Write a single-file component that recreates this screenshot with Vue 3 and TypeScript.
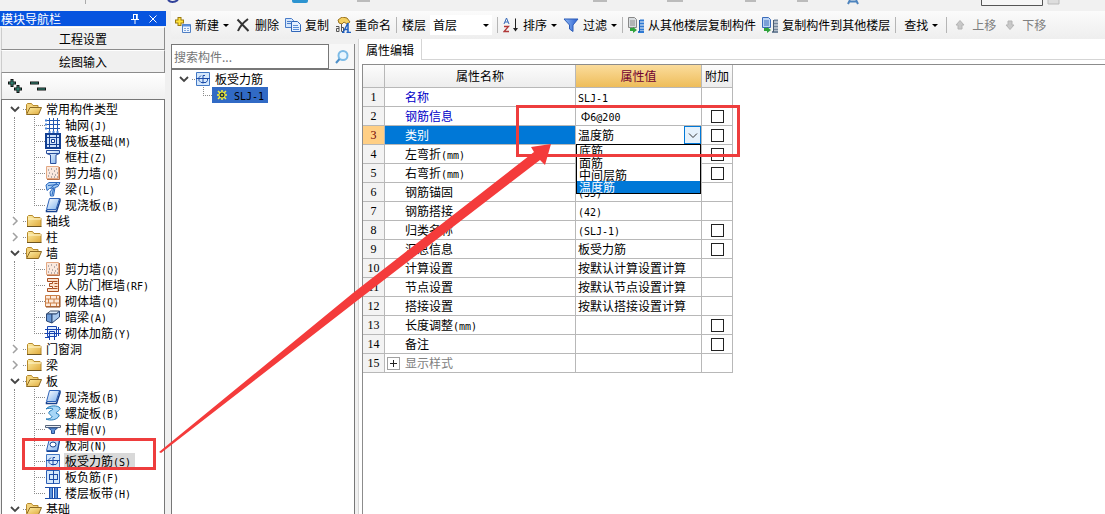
<script setup lang="ts">
import { computed, h, ref } from 'vue'

interface TreeChild {
  icon: string
  label: string
}
interface TreeGroup {
  label: string
  open: boolean
  children: TreeChild[]
}
interface PropertyRow {
  name: string
  value: string
  check?: boolean
  kind?: 'key' | 'combo' | 'group'
}

const Mixed = (props: { text: string }) =>
  h(
    'span',
    { class: 'mixed' },
    props.text
      .split(/([\x21-\x7e]+)/)
      .filter(Boolean)
      .map((part) => (/^[\x21-\x7e]/.test(part) ? h('span', { class: 'latin' }, part) : part)),
  )
Mixed.props = ['text']

const groups = ref<TreeGroup[]>([
  {
    label: '常用构件类型',
    open: true,
    children: [
      { icon: 'grid', label: '轴网(J)' },
      { icon: 'raft', label: '筏板基础(M)' },
      { icon: 'column', label: '框柱(Z)' },
      { icon: 'shear', label: '剪力墙(Q)' },
      { icon: 'beam', label: '梁(L)' },
      { icon: 'slab', label: '现浇板(B)' },
    ],
  },
  { label: '轴线', open: false, children: [] },
  { label: '柱', open: false, children: [] },
  {
    label: '墙',
    open: true,
    children: [
      { icon: 'shear', label: '剪力墙(Q)' },
      { icon: 'doorwall', label: '人防门框墙(RF)' },
      { icon: 'brick', label: '砌体墙(Q)' },
      { icon: 'hidden', label: '暗梁(A)' },
      { icon: 'masonry', label: '砌体加筋(Y)' },
    ],
  },
  { label: '门窗洞', open: false, children: [] },
  { label: '梁', open: false, children: [] },
  {
    label: '板',
    open: true,
    children: [
      { icon: 'slab', label: '现浇板(B)' },
      { icon: 'spiral', label: '螺旋板(B)' },
      { icon: 'cap', label: '柱帽(V)' },
      { icon: 'hole', label: '板洞(N)' },
      { icon: 'rebar', label: '板受力筋(S)' },
      { icon: 'negative', label: '板负筋(F)' },
      { icon: 'strip', label: '楼层板带(H)' },
    ],
  },
  { label: '基础', open: true, children: [] },
])
const selected = ref('板受力筋(S)')

const rows: PropertyRow[] = [
  { name: '名称', value: 'SLJ-1', kind: 'key' },
  { name: '钢筋信息', value: ' Φ6@200', check: true, kind: 'key' },
  { name: '类别', value: '温度筋', check: true, kind: 'combo' },
  { name: '左弯折(mm)', value: '', check: true },
  { name: '右弯折(mm)', value: '', check: true },
  { name: '钢筋锚固', value: '(35)' },
  { name: '钢筋搭接', value: '(42)' },
  { name: '归类名称', value: '(SLJ-1)', check: true },
  { name: '汇总信息', value: '板受力筋', check: true },
  { name: '计算设置', value: '按默认计算设置计算' },
  { name: '节点设置', value: '按默认节点设置计算' },
  { name: '搭接设置', value: '按默认搭接设置计算' },
  { name: '长度调整(mm)', value: '', check: true },
  { name: '备注', value: '', check: true },
  { name: '显示样式', value: '', kind: 'group' },
]

const category = ref('温度筋')
const listOpen = ref(true)
const options = ['底筋', '面筋', '中间层筋', '温度筋']
const activeIndex = computed(() => options.indexOf(category.value))

function choose(option: string) {
  category.value = option
  listOpen.value = false
}
</script>

<template>
  <div class="app">
    <svg class="defs" width="0" height="0" aria-hidden="true">
      <defs>
        <linearGradient id="gBlue" x1="0" y1="0" x2="1" y2="1">
          <stop offset="0" stop-color="#ffffff" />
          <stop offset="1" stop-color="#7fb2ee" />
        </linearGradient>
        <linearGradient id="gFunnel" x1="0" y1="0" x2="1" y2="0">
          <stop offset="0" stop-color="#8fb9f4" />
          <stop offset="1" stop-color="#2a5fd0" />
        </linearGradient>
        <linearGradient id="gFolder" x1="0" y1="0" x2="1" y2="1">
          <stop offset="0" stop-color="#fff0a8" />
          <stop offset="1" stop-color="#dfa93a" />
        </linearGradient>
        <symbol id="folder-closed" viewBox="0 0 16 16">
          <path d="M1.500 13.500V3.500l1-1h4l1.500 2h6l1 1v8z" fill="url(#gFolder)" stroke="#b78a2c" />
          <path d="M2 6h13" stroke="#fff6cf" />
          <path d="M1 13.500h14.500" stroke="#6d5420" />
        </symbol>
        <symbol id="folder-open" viewBox="0 0 16 16">
          <path d="M.5 12.500v-9l1-1h4l1.500 2h5v3" fill="#f3d37c" stroke="#b78a2c" />
          <path d="M.5 13.500L4 6.500h11.500l-3 7z" fill="url(#gFolder)" stroke="#8d6a22" />
        </symbol>
        <symbol id="grid" viewBox="0 0 16 16">
          <path d="M4.500 1v14M8.500 1v14M12.500 1v14M1 3.500h14M1 7.500h14M1 11.500h14" stroke="#2458b0" fill="none" />
          <path d="M0 2.500h2v2H0zM0 6.500h2v2H0zM0 10.500h2v2H0zM3.500 14h2v2h-2zM7.500 14h2v2h-2zM11.500 14h2v2h-2z" fill="#4b86d8" />
        </symbol>
        <symbol id="raft" viewBox="0 0 16 16">
          <path d="M1 1h14v14H1z" fill="#cfe3fb" stroke="#123f92" stroke-width="2" />
          <path d="M4.500 2v12M11.500 2v12M2 4.500h12M2 11.500h12" stroke="#123f92" />
          <path d="M6.500 6.500h3v3h-3z" fill="#fff" stroke="#123f92" />
        </symbol>
        <symbol id="column" viewBox="0 0 16 16">
          <path d="M1.500 1.500h13v3l-3.500 1.500v8.500H5.500V6L1.500 4.500z" fill="url(#gBlue)" stroke="#2a4f9c" />
          <path d="M2 4.500h12" stroke="#2a4f9c" />
        </symbol>
        <symbol id="shear" viewBox="0 0 16 16">
          <path d="M1.500 1.500h12v12h-12z" fill="#fbe9de" stroke="#e3a883" />
          <path d="M14.500 2v12.500H2" stroke="#b9714a" fill="none" />
          <path d="M3 5h1M6 4h1M9 6h1M11 4h1M4 8h1M7 9h1M10 10h1M3 11h1M6 12h1M12 8h1M9 12h1M12 12h1" stroke="#6e6e78" />
        </symbol>
        <symbol id="beam" viewBox="0 0 16 16">
          <path d="M1 4l3-2.500h11l-2 4-3 1-1.500 8.500H5.500l-.5-4 3-4-3.500.5L2 9.500z" fill="#a9d0f6" stroke="#2b68bd" />
          <path d="M3 4.500l10-1M5.500 7L12 2M7 14l2-8" stroke="#2b68bd" fill="none" />
        </symbol>
        <symbol id="slab" viewBox="0 0 16 16">
          <path d="M4.500 1.500h10l-3.500 11H1.500z" fill="url(#gBlue)" stroke="#2e63b8" />
          <path d="M1.500 13v1.500H11.500L15 4V1.500" fill="none" stroke="#17418e" stroke-width="1.500" />
        </symbol>
        <symbol id="doorwall" viewBox="0 0 16 16">
          <path d="M2.500 1.500h11v13h-11v-3h5v-2h-3v-3h3v-2h-5z" fill="#fde2cb" stroke="#a84f22" />
          <path d="M7.500 4.500h5M7.500 11.500h5M9.500 6.500h3M9.500 9.500h3" stroke="#a84f22" />
        </symbol>
        <symbol id="brick" viewBox="0 0 16 16">
          <path d="M.5 2.500h14v11H.5z" fill="#fdeadb" stroke="#cc8048" />
          <path d="M1 6h14M1 10h14M5.500 2.500V6M11.500 2.500V6M3.500 6v4M9 6v4M5.500 10v4M11.500 10v4" stroke="#cc8048" fill="none" />
          <path d="M15 3v11H1" stroke="#8e4a20" fill="none" />
        </symbol>
        <symbol id="hidden" viewBox="0 0 16 16">
          <path d="M1.500 5l4-3h9l-3 3z" fill="#dbe9f8" stroke="#44546c" />
          <path d="M1.500 5H7v9l-5.500-2z" fill="#6b9bd8" stroke="#2b4674" />
          <path d="M7 5h4.500L14.500 2v6L7 14z" fill="#a9c9ee" stroke="#2b4674" />
        </symbol>
        <symbol id="masonry" viewBox="0 0 16 16">
          <path d="M2.500 1.500h9v10h-9z" fill="#e2efff" stroke="#1743b0" />
          <path d="M0 4.500h16M0 8.500h16M4.500 15V6.500h5V15M13.500 2v9M0 12.500h5" stroke="#1743b0" fill="none" />
        </symbol>
        <symbol id="spiral" viewBox="0 0 16 16">
          <path d="M1 4C4 0 13 0 15 3c1 2-4 4-4 5 1 1 4 1 3 3-2 4-9 5-13 3 3 0 6-1 6-2.500C6 10 3 9 4 7c1-1.500 4-2 4-3C7 3 3 3 1 4z" fill="#a6d6f7" stroke="#237ab8" />
        </symbol>
        <symbol id="cap" viewBox="0 0 16 16">
          <path d="M.5 4.500h15v2H.5z" fill="#e8edf4" stroke="#56647a" />
          <path d="M3.500 7h9l-3 2.500v3h-3v-3z" fill="#5f92d6" stroke="#274f90" />
        </symbol>
        <symbol id="hole" viewBox="0 0 16 16">
          <path d="M4.500 1.500h10l-2 12H1.500z" fill="url(#gBlue)" stroke="#2e63b8" />
          <path d="M1.500 14.500H12.500L15 2" fill="none" stroke="#17418e" />
          <ellipse cx="8" cy="7.500" rx="3" ry="2.500" fill="#fff" stroke="#17418e" />
        </symbol>
        <symbol id="rebar" viewBox="0 0 16 16">
          <path d="M1.500 1.500h13v13h-13z" fill="#d5e8fc" stroke="#4378c4" />
          <path d="M1 7.500h14M6 4.500l-2 2v3l2 2h5l1.500-2v-2M10 4.500H8v8" stroke="#1c4ca8" fill="none" />
        </symbol>
        <symbol id="negative" viewBox="0 0 16 16">
          <path d="M1.500 1.500h13v13h-13z" fill="#d5e8fc" stroke="#2d5fb5" />
          <path d="M8.500 1v14M4 5.500h9M4 10.500h9M4.500 5v6M12.500 5v6" stroke="#1c4ca8" fill="none" />
        </symbol>
        <symbol id="strip" viewBox="0 0 16 16">
          <path d="M5 3h2v10H5zM10 3h2v10h-2z" fill="#5b93dc" />
          <path d="M0 2.500h16M0 13.500h16M4.500 3v10M7.500 3v10M9.500 3v10M12.500 3v10" stroke="#1c4ca8" fill="none" />
        </symbol>
        <symbol id="new" viewBox="0 0 16 16">
          <path d="M4.500 0v9M0 4.500h9" stroke="#9a7a10" stroke-width="4" />
          <path d="M4.500 1v7M1 4.500h7" stroke="#ffe23c" stroke-width="2" />
          <path d="M7.500 7.500h8v8h-8z" fill="#eef5ff" stroke="#4f7fc4" />
          <path d="M8 8.500h7" stroke="#5a8fe0" stroke-width="2" />
          <path d="M9 11.500h2M12 11.500h2M9 13.500h2M12 13.500h2" stroke="#7fa6dc" />
        </symbol>
        <symbol id="delete" viewBox="0 0 16 16">
          <path d="M2.500 2.500l11 11.500M13 2C9 5 5 9 3 14" stroke="#333" stroke-width="2" fill="none" />
        </symbol>
        <symbol id="copy" viewBox="0 0 16 16">
          <path d="M.5 1.500h6l2 2v7h-8z" fill="#d4e6fb" stroke="#4a7cc8" />
          <path d="M2 4.500h4M2 6.500h4" stroke="#4a7cc8" />
          <path d="M6.500 4.500h6l3 3v7h-9z" fill="#e6f1ff" stroke="#3167b9" />
          <path d="M8 8.500h5M8 10.500h6M8 12.500h6" stroke="#5b8fd6" />
        </symbol>
        <symbol id="rename" viewBox="0 0 16 16">
          <path d="M3 3l4-3 5 1 3 4-3 2-3-2-2 2-3-1z" fill="#f3cf61" stroke="#9b7420" />
          <path d="M1 9.500h3v5H1.500v-3H4M6.500 7v7.500h2v-4h-2" stroke="#555" fill="none" />
          <path d="M8 15.500L13 6v9.500M9.500 12.500H13M11.500 15.500H16M7 15.500h2.500" stroke="#1f5fc0" stroke-width="1.500" fill="none" />
        </symbol>
        <symbol id="sort" viewBox="0 0 16 16">
          <path d="M1 7l2.500-6L6 7M2 5h3" stroke="#3568b8" fill="none" />
          <path d="M1 9.500h4.500L1 14.500h5" stroke="#b03838" fill="none" stroke-width="1.300" />
          <path d="M12.500 1.500v11" stroke="#222" />
          <path d="M10 11h5l-2.500 3.500z" fill="#222" />
        </symbol>
        <symbol id="filter" viewBox="0 0 16 16">
          <path d="M1 2h14l-5 6v6.500L6.500 12V8z" fill="url(#gFunnel)" stroke="#2c5cb8" />
        </symbol>
        <symbol id="copy-from" viewBox="0 0 16 16">
          <path d="M.5.5h6l2 2v8h-8z" fill="#d9dde0" stroke="#888" />
          <path d="M2 4h5M2 6h5M2 8h5" stroke="#8a8a8a" />
          <path d="M2 11h3v-1l4 3-4 3v-2H2z" fill="#2fa33c" />
          <path d="M12 3.500h4M11 6.500h5M11 9.500h5M11 12.500h5M10 15h6" stroke="#2f7ad4" stroke-width="2" />
          <path d="M11.500 3v12" stroke="#1f5aa8" />
        </symbol>
        <symbol id="copy-to" viewBox="0 0 16 16">
          <path d="M.5.5h6l2 2v8h-8z" fill="#bcd4f4" stroke="#3b6cba" />
          <path d="M2 4h5M2 6h5M2 8h5" stroke="#3b6cba" />
          <path d="M2 11h3v-1l4 3-4 3v-2H2z" fill="#2fa33c" />
          <path d="M12 3.500h4M11 6.500h5M11 9.500h5M11 12.500h5M10 15h6" stroke="#72869c" stroke-width="2" />
          <path d="M11.500 3v12" stroke="#4a5c70" />
        </symbol>
        <symbol id="up" viewBox="0 0 16 16">
          <path d="M8 3.500l4 4.500h-2v4H6V8H4z" fill="#c8c8c8" stroke="#b4b4b4" />
        </symbol>
        <symbol id="down" viewBox="0 0 16 16">
          <path d="M8 12.500L4 8h2V4h4v4h2z" fill="#c8c8c8" stroke="#b4b4b4" />
        </symbol>
        <symbol id="gear" viewBox="0 0 12 12">
          <path d="M6 1v10M1 6h10M2 2l8 8M10 2l-8 8" stroke="#f4ee3a" stroke-width="1.500" />
          <circle cx="6" cy="6" r="3.500" fill="#f4ee3a" />
          <circle cx="6" cy="6" r="2.500" fill="#2b3a3a" />
          <circle cx="6" cy="6" r="1" fill="#f4ee3a" />
        </symbol>
        <symbol id="chev-down" viewBox="0 0 12 12">
          <path d="M2 4l4 4 4-4" fill="none" stroke="#444" stroke-width="1.800" />
        </symbol>
        <symbol id="chev-right" viewBox="0 0 12 12">
          <path d="M4 2l4 4-4 4" fill="none" stroke="#a0a0a0" stroke-width="1.500" />
        </symbol>
        <symbol id="elbow" viewBox="0 0 11 16">
          <path d="M.5 0v16M2 8.500h9" stroke="#8a8a8a" stroke-dasharray="1 1" fill="none" />
        </symbol>
        <symbol id="elbow-last" viewBox="0 0 11 16">
          <path d="M.5 0v9M2 8.500h9" stroke="#8a8a8a" stroke-dasharray="1 1" fill="none" />
        </symbol>
      </defs>
    </svg>

    <div class="ribbon-edge">
      <svg width="1105" height="12" aria-hidden="true">
        <path d="M85.500 0v4" stroke="#aaa" />
        <path d="M168 0q4 4 10 0" fill="none" stroke="#30409a" stroke-width="2" />
        <path d="M292 0h16v1q0 2-2 2h-12q-2 0-2-2z" fill="#2d94d0" />
        <path d="M357 1h13M593 1h14M667 1h16M745 1h11M797 1h11" stroke="#bbb" stroke-width="2" />
        <path d="M848 4l2-4M858 4l-2-4M849 1.500h8" stroke="#4d83bd" stroke-width="2" />
        <path d="M981.500 0v5.500h61V0" fill="#f6f6f6" stroke="#555" />
        <path d="M1048 0v4h11V0" fill="#ddd" stroke="#bbb" />
      </svg>
    </div>

    <div class="workspace">
      <aside class="nav">
        <header class="nav-title">
          <span class="nav-name">模块导航栏</span>
          <button class="title-btn" aria-label="固定">
            <svg width="10" height="11"><path d="M3.500 1v5M7 1v5M3 1.500h4.500M1 6.500h8M5 7v4" stroke="#fff" fill="none" /><path d="M6 1h1.500v5H6z" fill="#fff" /></svg>
          </button>
          <button class="title-btn" aria-label="关闭">
            <svg width="10" height="10"><path d="M1.500 1.500l7 7M8.500 1.500l-7 7" stroke="#fff" /></svg>
          </button>
        </header>
        <button class="nav-page">工程设置</button>
        <button class="nav-page">绘图输入</button>
        <div class="nav-tools">
          <button class="tool-btn" aria-label="全部展开">
            <svg width="18" height="18"><path d="M6 2v8M2 6h8M12 8v8M8 12h8" stroke="#111" stroke-width="3" /><path d="M6 3v6M3 6h6M12 9v6M9 12h6" stroke="#3a9a88" /></svg>
          </button>
          <button class="tool-btn" aria-label="全部折叠">
            <svg width="18" height="18"><path d="M1 6h9M8 12h9" stroke="#111" stroke-width="3" /><path d="M2 6h7M9 12h7" stroke="#3a9a88" /></svg>
          </button>
        </div>
        <ul class="tree nav-tree">
          <li v-for="group in groups" :key="group.label">
            <div class="row" @click="group.open = !group.open">
              <svg class="chev"><use :href="group.open ? '#chev-down' : '#chev-right'" /></svg>
              <span class="stub"></span>
              <svg class="icon"><use :href="group.open ? '#folder-open' : '#folder-closed'" /></svg>
              <Mixed class="label" :text="group.label" />
            </div>
            <ul v-if="group.open && group.children.length" class="tree branch">
              <li v-for="(child, i) in group.children" :key="child.label" class="row child" @click="selected = child.label">
                <svg class="elbow"><use :href="i === group.children.length - 1 ? '#elbow-last' : '#elbow'" /></svg>
                <svg class="icon"><use :href="'#' + child.icon" /></svg>
                <Mixed class="label" :class="{ picked: child.label === selected && group.label === '板' }" :text="child.label" />
              </li>
            </ul>
          </li>
        </ul>
      </aside>

      <main class="main">
        <nav class="toolbar">
          <button class="cmd"><svg class="icon"><use href="#new" /></svg>新建<i class="caret"></i></button>
          <button class="cmd"><svg class="icon"><use href="#delete" /></svg>删除</button>
          <button class="cmd"><svg class="icon"><use href="#copy" /></svg>复制</button>
          <button class="cmd"><svg class="icon"><use href="#rename" /></svg>重命名</button>
          <span class="sep"></span>
          <label class="floor">楼层
            <span class="floor-box">
              <select class="floor-select"><option>首层</option></select>
              <i class="caret"></i>
            </span>
          </label>
          <span class="sep"></span>
          <button class="cmd"><svg class="icon"><use href="#sort" /></svg>排序<i class="caret"></i></button>
          <button class="cmd"><svg class="icon"><use href="#filter" /></svg>过滤<i class="caret"></i></button>
          <span class="sep"></span>
          <button class="cmd"><svg class="icon"><use href="#copy-from" /></svg>从其他楼层复制构件</button>
          <button class="cmd"><svg class="icon"><use href="#copy-to" /></svg>复制构件到其他楼层</button>
          <span class="sep"></span>
          <button class="cmd plain">查找<i class="caret"></i></button>
          <span class="sep"></span>
          <button class="cmd" disabled><svg class="icon"><use href="#up" /></svg>上移</button>
          <button class="cmd" disabled><svg class="icon"><use href="#down" /></svg>下移</button>
        </nav>

        <div class="panes">
          <section class="members">
            <div class="search">
              <input class="search-input" type="text" placeholder="搜索构件..." aria-label="搜索构件" />
              <button class="search-btn" aria-label="搜索">
                <svg width="16" height="16"><circle cx="9" cy="6.500" r="4.500" fill="#e9f6ff" stroke="#7dbbe6" stroke-width="2" /><path d="M5.500 10L2 14" stroke="#4d8fc8" stroke-width="2" /></svg>
              </button>
            </div>
            <ul class="tree member-tree">
              <li>
                <div class="row">
                  <svg class="chev"><use href="#chev-down" /></svg>
                  <span class="stub"></span>
                  <svg class="icon"><use href="#rebar" /></svg>
                  <span class="label">板受力筋</span>
                </div>
                <ul class="tree">
                  <li class="row leaf">
                    <svg class="elbow"><use href="#elbow-last" /></svg>
                    <span class="member"><svg class="gear"><use href="#gear" /></svg><Mixed text="SLJ-1" /></span>
                  </li>
                </ul>
              </li>
            </ul>
          </section>

          <section class="props">
            <div class="tabs"><button class="tab">属性编辑</button></div>
            <div class="sheet">
              <table class="grid">
                <colgroup><col class="c-no" /><col class="c-name" /><col class="c-value" /><col class="c-extra" /></colgroup>
                <thead>
                  <tr><th></th><th>属性名称</th><th class="hot">属性值</th><th>附加</th></tr>
                </thead>
                <tbody>
                  <tr v-for="(row, i) in rows" :key="row.name" :class="row.kind">
                    <th scope="row" class="no">{{ i + 1 }}</th>
                    <td class="name">
                      <div class="cell">
                        <button v-if="row.kind === 'group'" class="expand" aria-label="展开"><svg width="11" height="11"><path d="M2 5.500h7M5.500 2v7" stroke="#222" /></svg></button>
                        <Mixed :text="row.name" />
                      </div>
                    </td>
                    <td class="value">
                      <div v-if="row.kind === 'combo'" class="combo">
                        <input v-model="category" class="combo-input" type="text" role="combobox" :aria-expanded="listOpen" aria-controls="category-list" aria-label="类别" />
                        <button class="combo-btn" aria-label="打开列表" @click="listOpen = !listOpen">
                          <svg width="12" height="12"><path d="M2 4.500l4 4 4-4" fill="none" stroke="#333" /></svg>
                        </button>
                        <ul v-if="listOpen" id="category-list" class="options" role="listbox">
                          <li v-for="(option, n) in options" :key="option" role="option" :aria-selected="n === activeIndex" :class="{ active: n === activeIndex }" @click="choose(option)">{{ option }}</li>
                        </ul>
                      </div>
                      <div v-else class="cell"><Mixed :text="row.value" /></div>
                    </td>
                    <td class="extra"><input v-if="row.check" class="box" type="checkbox" :aria-label="row.name + ' 附加'" /></td>
                  </tr>
                </tbody>
              </table>
            </div>
          </section>
        </div>
      </main>
    </div>

    <svg class="callout" width="760" height="514" aria-hidden="true">
      <rect x="23.500" y="439.500" width="131" height="29" />
      <rect x="517.500" y="106.500" width="221" height="49" />
      <path d="M159 452L353 293 534 152 531 147 551 144 545 165 540 160 358 300 161 453z" />
    </svg>
  </div>
</template>

<style>
html,
body {
  overflow: hidden;
}
.latin {
  font-family: "DejaVu Sans Mono", monospace;
  font-size: 10px;
  line-height: 12px;
}
.mixed {
  white-space: pre;
}
</style>

<style scoped>
.app {
  position: relative;
  display: flex;
  flex-direction: column;
  height: 100vh;
  overflow: hidden;
  background: #f0f0f0;
  color: #000;
  font: 12px/16px "Noto Sans CJK SC", sans-serif;
}
.defs {
  position: absolute;
}
button,
input,
select {
  box-sizing: border-box;
  margin: 0;
  padding: 0;
  border: 0;
  border-radius: 0;
  background: none;
  color: inherit;
  font: inherit;
}
svg {
  display: block;
  flex: none;
}
.ribbon-edge {
  flex: none;
  height: 11px;
  overflow: hidden;
  background: #f1f1f1;
}
.workspace {
  display: flex;
  flex: 1;
  min-height: 0;
}
.nav {
  display: flex;
  flex: none;
  flex-direction: column;
  width: 166px;
  margin-right: 5px;
}
.nav-title {
  display: flex;
  flex: none;
  align-items: center;
  height: 15px;
  margin-bottom: 1px;
  padding: 0 4px 0 1px;
  background: #0754df;
  color: #fff;
}
.nav-name {
  flex: 1;
}
.title-btn {
  width: 18px;
  display: flex;
  justify-content: center;
}
.nav-page {
  flex: none;
  height: 23px;
  margin: 0 1px;
  border: 1px solid #8c8c8c;
  border-top-color: #fff;
  border-left-color: #ccc;
  background: #f0f0f0;
}
.nav-tools {
  display: flex;
  flex: none;
  gap: 5px;
  align-items: center;
  height: 26px;
  margin: 0 1px;
  padding-left: 4px;
  border-left: 1px solid #b0b0b0;
  background: linear-gradient(#fff, #f0f0f0);
}
.tree {
  margin: 0;
  padding: 0;
  list-style: none;
}
.nav-tree {
  flex: 1;
  overflow: hidden;
  margin: 0 1px;
  padding: 1px 0 0 7px;
  border: 1px solid #777;
  border-bottom: 0;
  background: #fff;
}
.row {
  display: flex;
  align-items: center;
  height: 16px;
}
.chev {
  width: 12px;
  height: 12px;
}
.stub {
  width: 3px;
  margin-left: 2px;
  border-top: 1px dotted #8a8a8a;
}
.icon {
  width: 16px;
  height: 16px;
}
.label {
  height: 16px;
  margin-left: 3px;
  padding: 0 1px;
}
.branch {
  margin-left: 5px;
  border-left: 1px dotted #8a8a8a;
}
.child {
  padding-left: 19px;
}
.elbow {
  width: 11px;
  height: 16px;
}
.picked {
  padding-right: 4px;
  background: #d9d9d9;
}
.main {
  display: flex;
  flex: 1;
  flex-direction: column;
  min-width: 0;
}
.toolbar {
  display: flex;
  flex: none;
  gap: 6px;
  align-items: center;
  height: 28px;
  padding-left: 4px;
  overflow: hidden;
  background: linear-gradient(#fbfbfb, #eeeeee);
  white-space: nowrap;
}
.cmd {
  display: flex;
  flex: none;
  gap: 4px;
  align-items: center;
}
.cmd:disabled {
  color: #808080;
}
.plain {
  padding: 0 3px;
}
.caret {
  border: 3px solid transparent;
  border-top-color: #000;
  border-bottom: 0;
}
.sep {
  flex: none;
  width: 1px;
  height: 16px;
  margin: 0 -1px;
  background: #b5b5b5;
}
.floor {
  display: flex;
  flex: none;
  gap: 4px;
  align-items: center;
}
.floor-box {
  display: flex;
  align-items: center;
  width: 62px;
  height: 20px;
  background: #fff;
}
.floor-select {
  flex: 1;
  padding-left: 3px;
  appearance: none;
}
.floor-box .caret {
  margin-right: 3px;
}
.panes {
  display: flex;
  flex: 1;
  min-height: 0;
}
.members {
  display: flex;
  flex: none;
  flex-direction: column;
  width: 184px;
  padding-top: 5px;
}
.search {
  display: flex;
  flex: none;
  height: 25px;
  border-right: 1px solid #888;
}
.search-input {
  width: 158px;
  padding: 0 2px;
  border: 1px solid #777;
  background: #fff;
}
.search-input::placeholder {
  color: #757575;
}
.search-btn {
  display: flex;
  flex: 1;
  align-items: center;
  justify-content: center;
  background: #f7f7f7;
}
.member-tree {
  flex: 1;
  padding: 1px 0 0 6px;
  border: 1px solid #777;
  border-width: 1px 1px 0;
  background: #fff;
}
.leaf {
  padding-left: 25px;
}
.member {
  display: flex;
  gap: 6px;
  align-items: center;
  height: 16px;
  margin-left: -2px;
  padding: 0 4px;
  background: #316ac5;
}
.gear {
  width: 12px;
  height: 12px;
}
.props {
  display: flex;
  flex: 1;
  flex-direction: column;
  min-width: 0;
  margin-left: 3px;
  border-left: 1px solid #d5d5d5;
  background: #fff;
}
.tabs {
  display: flex;
  flex: none;
  height: 20px;
  border-bottom: 1px solid #d5d5d5;
}
.tab {
  height: 21px;
  padding: 0 7px;
  border-right: 1px solid #d5d5d5;
  background: #fff;
}
.sheet {
  flex: 1;
  margin: 4px 0 0 3px;
  border-top: 1px solid #8c8c8c;
  border-left: 1px solid #8c8c8c;
}
.grid {
  width: 370px;
  border-collapse: separate;
  border-spacing: 0;
  table-layout: fixed;
}
.c-no {
  width: 22px;
}
.c-name {
  width: 191px;
}
.c-value {
  width: 126px;
}
.c-extra {
  width: 31px;
}
.grid th,
.grid td {
  box-sizing: border-box;
  height: 19px;
  padding: 0;
  border-right: 1px solid #b8b8b8;
  border-bottom: 1px solid #b8b8b8;
  font-weight: 400;
  line-height: 16px;
  white-space: nowrap;
}
.grid thead th {
  height: 23px;
  background: linear-gradient(#fcfcfc, #ededed);
}
.grid thead .hot {
  background: linear-gradient(#fbdc9c, #eebd5a);
  color: #700030;
}
.grid .no {
  background: #f3f3f3;
  font-family: "Liberation Serif", serif;
}
.cell {
  display: flex;
  align-items: center;
  height: 18px;
}
.grid .name {
  padding-left: 20px;
}
.key .name {
  color: #0000c8;
}
.grid .value {
  padding-left: 2px;
}
.grid .combo .no {
  background: #ffcf85;
  color: #700000;
}
.grid .combo .name {
  background: #0078d7;
  color: #fff;
}
.grid .group .name {
  padding-left: 2px;
  color: #808080;
}
.expand {
  margin-right: 5px;
  border: 1px solid #a0a0a0;
}
.value .combo {
  position: relative;
  display: flex;
  height: 18px;
}
.combo-input {
  flex: 1;
  min-width: 0;
}
.combo-btn {
  display: flex;
  align-items: center;
  justify-content: center;
  width: 17px;
  border: 1px solid #0078d7;
  background: #e5f1fb;
}
.options {
  position: absolute;
  z-index: 1;
  top: 18px;
  right: 0;
  left: -2px;
  margin: 0;
  padding: 0;
  border: 1px solid #000;
  background: #fff;
  list-style: none;
}
.options li {
  height: 12px;
  padding-left: 2px;
  line-height: 12px;
}
.options .active {
  background: #0078d7;
  color: #fff;
}
.box {
  display: block;
  width: 13px;
  height: 13px;
  margin: 0 auto;
  border: 1px solid #222;
  background: #fff;
  appearance: none;
}
.box:checked {
  background: #0078d7;
}
.callout {
  position: absolute;
  top: 0;
  left: 0;
  z-index: 2;
  pointer-events: none;
}
.callout rect {
  fill: none;
  stroke: #ee3d3d;
  stroke-width: 3;
}
.callout path {
  fill: #f43b3b;
}
</style>
